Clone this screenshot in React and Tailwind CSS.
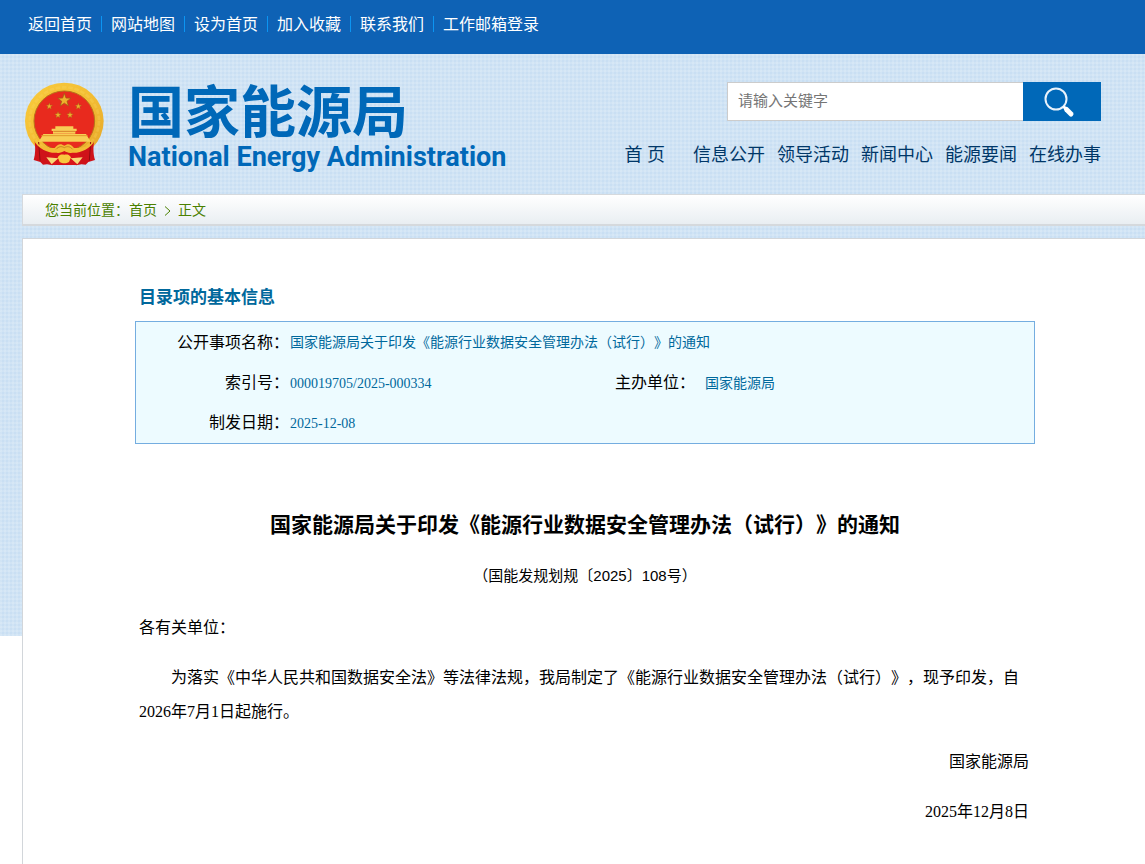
const topLinks = ["返回首页", "网站地图", "设为首页", "加入收藏", "联系我们", "工作邮箱登录"];
const navLinks = ["信息公开", "领导活动", "新闻中心", "能源要闻", "在线办事"];

const STAR =
  "M0,-10 L2.35,-3.24 L9.51,-3.09 L3.8,1.24 L5.88,8.09 L0,4 L-5.88,8.09 L-3.8,1.24 L-9.51,-3.09 L-2.35,-3.24 Z";

function Emblem() {
  return (
    <svg viewBox="28 36 240 252" className="h-[84px] w-[80px] shrink-0" aria-hidden="true">
      <defs>
        <linearGradient id="gold" x1="0" y1="0" x2="1" y2="1">
          <stop offset="0" stopColor="#f9cb3c" />
          <stop offset="0.5" stopColor="#f3bd33" />
          <stop offset="1" stopColor="#e5a62a" />
        </linearGradient>
      </defs>
      {/* wreath */}
      <ellipse cx="149" cy="153" rx="118" ry="115" fill="url(#gold)" />
      <ellipse cx="149" cy="153" rx="104" ry="101" fill="none" stroke="#fbdb66" strokeWidth="8" strokeDasharray="14 5" opacity="0.25" />
      <ellipse cx="149" cy="153" rx="91" ry="90" fill="#e82a1e" stroke="#b8741a" strokeWidth="3" />
      {/* stars */}
      <g fill="#efb02c" stroke="#9c5a14" strokeWidth="1">
        <path d={STAR} transform="translate(149 91) scale(2.1)" />
        <path d={STAR} transform="translate(104 109) scale(1.05)" />
        <path d={STAR} transform="translate(191 109) scale(1.05)" />
        <path d={STAR} transform="translate(130 135) scale(1.05)" />
        <path d={STAR} transform="translate(166 135) scale(1.05)" />
      </g>
      {/* gate */}
      <path d="M122 169h54v7h10v7h-4v8h-67v-8h-4v-7h11z" fill="#f8cd55" />
      <path d="M86 192h128l14 23H72z" fill="#f8cd55" />
      <path d="M80 197h139" stroke="#e09a2a" strokeWidth="3" />
      <path d="M116 184h66" stroke="#d9802a" strokeWidth="3" />
      {/* ribbons */}
      <path d="M60 214c6 12 30 28 62 34l-8 38-17-3-12 1-8-8-20-6c6-18 5-40 3-56z" fill="#cf1219" />
      <path d="M238 214c-6 12-30 28-62 34l8 38 17-3 12 1 8-8 20-6c-6-18-5-40-3-56z" fill="#cf1219" />
      <path d="M72 216l4 56M228 216l-4 56" stroke="#8f0a12" strokeWidth="3" />
      <path d="M102 240h96l-8 45h-82z" fill="#d9141a" />
      {/* lower wreath and gear */}
      <path d="M58 212c20 18 40 24 62 22 6-8 14-13 20-11l9 4 9-4c6-2 14 3 20 11 22 2 42-4 62-22-14 26-44 38-68 36-8 3-16-2-23-5-7 3-15 8-23 5-24 2-54-10-68-36z" fill="#f3bb35" />
      <path d="M124 238c8-9 16-10 25-5 9-5 17-4 25 5" fill="none" stroke="#c98422" strokeWidth="3" />
      <path d="M129 262c6-9 12-9 20-8 8-1 14-1 20 8l-6 14c-8 5-20 5-28 0z" fill="#f8c93f" />
      <path d="M95 262l36 3-20 18zM204 262l-36 3 20 18z" fill="#f8d776" />
    </svg>
  );
}

function SearchIcon() {
  return (
    <svg viewBox="0 0 32 32" className="mr-1 h-8 w-8" aria-hidden="true">
      <circle cx="12" cy="13" r="10.500" fill="none" stroke="#e8f2fb" strokeWidth="2" />
      <path d="M19.500 20.500l3 3" stroke="#fff" strokeWidth="3" />
      <path d="M22.500 23.500l4.500 4.500" stroke="#fff" strokeWidth="5" strokeLinecap="round" />
    </svg>
  );
}

function TopBar() {
  return (
    <div className="flex h-[54px] bg-[#0e62b5] pt-[13px] pl-7 text-[16px] leading-6 text-white">
      {topLinks.map((label, i) => (
        <div key={label} className="flex">
          {i > 0 && <span className="mx-[9px] mt-[3px] h-4 w-px bg-[#0c95f2]" />}
          <a href="#">{label}</a>
        </div>
      ))}
    </div>
  );
}

function Header() {
  return (
    <header className="flex h-[140px] justify-between pt-7 pr-11 pl-6">
      <a href="#" className="flex text-[#0068b8]">
        <Emblem />
        <div className="ml-6 font-bold">
          <div className="text-[56px] leading-[62px]">国家能源局</div>
          <div className="font-[Roboto,sans-serif] text-[27px] leading-[26px]">
            National Energy Administration
          </div>
        </div>
      </a>
      <div className="flex flex-col items-end">
        <form className="flex h-[39px]" onSubmit={(e) => e.preventDefault()}>
          <input
            type="text"
            aria-label="请输入关键字"
            placeholder="请输入关键字"
            className="w-[296px] border border-r-0 border-[#ccc] bg-white px-[10px] text-[15px] text-[#333] outline-none placeholder:text-[#757575]"
          />
          <button type="submit" aria-label="搜索" className="flex w-[78px] items-center justify-center bg-[#0068b8]">
            <SearchIcon />
          </button>
        </form>
        <nav className="mt-5 flex gap-3 text-[18px] leading-7 text-[#003768]">
          <a href="#" className="mr-4">首 页</a>
          {navLinks.map((label) => (
            <a key={label} href="#">{label}</a>
          ))}
        </nav>
      </div>
    </header>
  );
}

function Breadcrumb() {
  return (
    <div className="ml-[22px] flex h-8 items-center border-t border-b-2 border-l border-[#d5d9dd] bg-linear-to-b from-white to-[#e9eef2] pt-[2px] pl-[22px] text-[14px] text-[#4b8000]">
      <span>您当前位置：</span>
      <a href="#">首页</a>
      <svg viewBox="0 0 7 10" className="mx-[7px] h-[10px] w-[7px]" aria-hidden="true">
        <path d="M1 0.500l5 4.500-5 4.500" fill="none" stroke="#4b8000" />
      </svg>
      <span>正文</span>
    </div>
  );
}

const labelCell = "p-0 text-right align-middle font-normal text-[16px] whitespace-nowrap text-black";
const valueCell = "p-0 pl-px text-left align-middle text-[14px] text-[#00689c]";

function InfoTable() {
  return (
    <div className="border border-[#74ade0] bg-[#edfbff]">
      <table className="w-full table-fixed border-collapse">
        <colgroup>
          <col className="w-[153px]" />
          <col className="w-[310px]" />
          <col className="w-[96px]" />
          <col />
        </colgroup>
        <tbody>
          <tr className="h-[41px]">
            <th scope="row" className={labelCell}>公开事项名称：</th>
            <td colSpan={3} className={valueCell}>国家能源局关于印发《能源行业数据安全管理办法（试行）》的通知</td>
          </tr>
          <tr className="h-10">
            <th scope="row" className={labelCell}>索引号：</th>
            <td className={valueCell}>000019705/2025-000334</td>
            <th scope="row" className={labelCell}>主办单位：</th>
            <td className="p-0 pl-[10px] text-left align-middle text-[14px] text-[#00689c]">国家能源局</td>
          </tr>
          <tr className="h-10">
            <th scope="row" className={labelCell}>制发日期：</th>
            <td className={valueCell}>2025-12-08</td>
          </tr>
        </tbody>
      </table>
    </div>
  );
}

function Article() {
  return (
    <main className="ml-[22px] min-h-[626px] border-t border-l border-[#d2d6da] bg-white pt-[47px] pb-9 pl-[2px] text-black">
      <div className="mx-auto w-full max-w-[900px]">
        <h2 className="mb-[11px] pl-1 text-[17px] leading-6 font-bold text-[#00689c]">目录项的基本信息</h2>
        <InfoTable />
        <h1 className="mt-[65px] text-center text-[21px] leading-8 font-bold">
          国家能源局关于印发《能源行业数据安全管理办法（试行）》的通知
        </h1>
        <p className="mt-[18px] text-center font-[Liberation_Sans,Noto_Sans_CJK_SC,sans-serif] text-[15px] leading-[34px]">
          （国能发规划规〔2025〕108号）
        </p>
        <div className="pr-[6px] pl-1 text-[16px] leading-[34px]">
          <p className="mt-[18px]">各有关单位：</p>
          <p className="mt-4 indent-8">
            为落实《中华人民共和国数据安全法》等法律法规，我局制定了《能源行业数据安全管理办法（试行）》，现予印发，自2026年7月1日起施行。
          </p>
          <p className="mt-4 text-right">国家能源局</p>
          <p className="mt-4 text-right">2025年12月8日</p>
        </div>
      </div>
    </main>
  );
}

export default function App() {
  return (
    <div
      lang="zh-CN"
      className="min-h-screen bg-white bg-[repeating-linear-gradient(90deg,rgba(255,255,255,0.14)_0_2px,transparent_2px_4px),repeating-linear-gradient(0deg,rgba(255,255,255,0.14)_0_2px,transparent_2px_4px),linear-gradient(#c9dff3,#c9dff3)] bg-[length:100%_636px] bg-no-repeat font-[Liberation_Serif,Noto_Sans_CJK_SC,sans-serif] [text-autospace:no-autospace] [text-spacing-trim:space-all]"
    >
      <TopBar />
      <Header />
      <Breadcrumb />
      <div className="h-3" />
      <Article />
    </div>
  );
}
